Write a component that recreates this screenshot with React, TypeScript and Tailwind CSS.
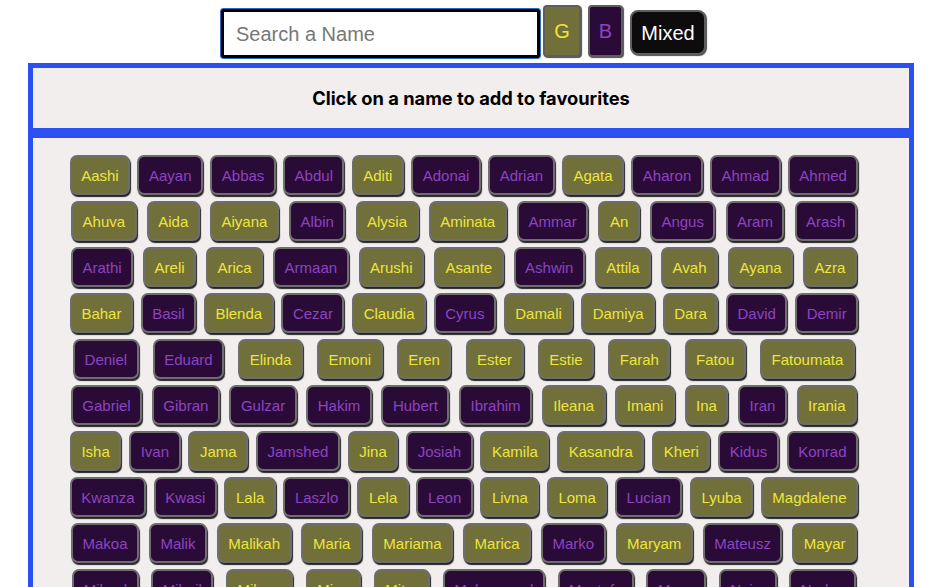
import React from "react";

type N = [string, "g" | "b"];

const names: N[] = [
  ["Aashi","g"],["Aayan","b"],["Abbas","b"],["Abdul","b"],["Aditi","g"],["Adonai","b"],["Adrian","b"],["Agata","g"],["Aharon","b"],["Ahmad","b"],["Ahmed","b"],
  ["Ahuva","g"],["Aida","g"],["Aiyana","g"],["Albin","b"],["Alysia","g"],["Aminata","g"],["Ammar","b"],["An","g"],["Angus","b"],["Aram","b"],["Arash","b"],
  ["Arathi","b"],["Areli","g"],["Arica","g"],["Armaan","b"],["Arushi","g"],["Asante","g"],["Ashwin","b"],["Attila","g"],["Avah","g"],["Ayana","g"],["Azra","g"],
  ["Bahar","g"],["Basil","b"],["Blenda","g"],["Cezar","b"],["Claudia","g"],["Cyrus","b"],["Damali","g"],["Damiya","g"],["Dara","g"],["David","b"],["Demir","b"],
  ["Deniel","b"],["Eduard","b"],["Elinda","g"],["Emoni","g"],["Eren","g"],["Ester","g"],["Estie","g"],["Farah","g"],["Fatou","g"],["Fatoumata","g"],
  ["Gabriel","b"],["Gibran","b"],["Gulzar","b"],["Hakim","b"],["Hubert","b"],["Ibrahim","b"],["Ileana","g"],["Imani","g"],["Ina","g"],["Iran","b"],["Irania","g"],
  ["Isha","g"],["Ivan","b"],["Jama","g"],["Jamshed","b"],["Jina","g"],["Josiah","b"],["Kamila","g"],["Kasandra","g"],["Kheri","g"],["Kidus","b"],["Konrad","b"],
  ["Kwanza","b"],["Kwasi","b"],["Lala","g"],["Laszlo","b"],["Lela","g"],["Leon","b"],["Livna","g"],["Loma","g"],["Lucian","b"],["Lyuba","g"],["Magdalene","g"],
  ["Makoa","b"],["Malik","b"],["Malikah","g"],["Maria","g"],["Mariama","g"],["Marica","g"],["Marko","b"],["Maryam","g"],["Mateusz","b"],["Mayar","g"],
  ["Mikael","b"],["Mihail","b"],["Milena","g"],["Mina","g"],["Mitra","g"],["Mohammed","b"],["Mostafa","b"],["Musa","b"],["Naim","b"],["Nadav","b"],
];

function NameButton({ name, g }: { name: string; g: "g" | "b" }) {
  const cls =
    g === "g"
      ? "bg-[#72703a] text-[#ece63c]"
      : "bg-[#2a0b37] text-[#8c44c2]";
  return (
    <button
      className={`mx-[3.5px] h-[40px] rounded-[7px] border-2 border-[#6e6e6e] px-[9.5px] text-[15px] leading-none shadow-[1px_2px_1px_rgba(0,0,0,0.85)] ${cls}`}
      style={{ fontFamily: '"Liberation Sans", Arial, sans-serif' }}
    >
      {name}
    </button>
  );
}

export default function App() {
  return (
    <div className="min-h-screen bg-white" style={{ fontFamily: '"Liberation Sans", Arial, sans-serif' }}>
      <div className="flex h-[63px] items-start justify-center pr-[16px] pt-[5px]">
        <div className="mt-[3px] h-[51px] w-[321px] rounded-[3px] border border-[#2a6bc4]">
          <div className="flex h-full w-full items-center rounded-[2px] border-[3px] border-black bg-white pl-[12px] text-[20px] text-[#777]">
            Search a Name
          </div>
        </div>
        <button className="ml-[2px] h-[52px] w-[38px] rounded-[4px] border-2 border-[#5e5e5e] bg-[#72703a] text-[20px] text-[#ece63c] shadow-[1px_1px_1px_rgba(0,0,0,0.7)]">
          G
        </button>
        <button className="ml-[7px] h-[52px] w-[35px] rounded-[4px] border-2 border-[#5e5e5e] bg-[#2a0b37] text-[20px] text-[#8c44c2] shadow-[1px_1px_1px_rgba(0,0,0,0.7)]">
          B
        </button>
        <button className="ml-[7px] mt-[5px] h-[45px] w-[76px] rounded-[8px] border-2 border-[#5e5e5e] bg-[#0d0b0b] text-[20px] text-white shadow-[1px_1px_1px_rgba(0,0,0,0.7)]">
          Mixed
        </button>
      </div>
      <div className="mx-auto w-[886px]">
        <div
          className="flex h-[70px] items-center justify-center border-[5px] border-[#2b4ff0] bg-[#f3eeee] pt-[1px] text-[18.3px] font-bold text-black"
          style={{ fontFamily: 'Inter, "Liberation Sans", sans-serif' }}
        >
          Click on a name to add to favourites
        </div>
        <div className="border-[5px] border-[#2b4ff0] bg-[#f3eeee] pb-[30px] pl-[33px] pr-[47px] pt-[17px]">
          <div className="flex flex-wrap justify-around gap-y-[6px]">
            {names.map(([n, g]) => (
              <NameButton key={n} name={n} g={g} />
            ))}
          </div>
        </div>
      </div>
    </div>
  );
}
